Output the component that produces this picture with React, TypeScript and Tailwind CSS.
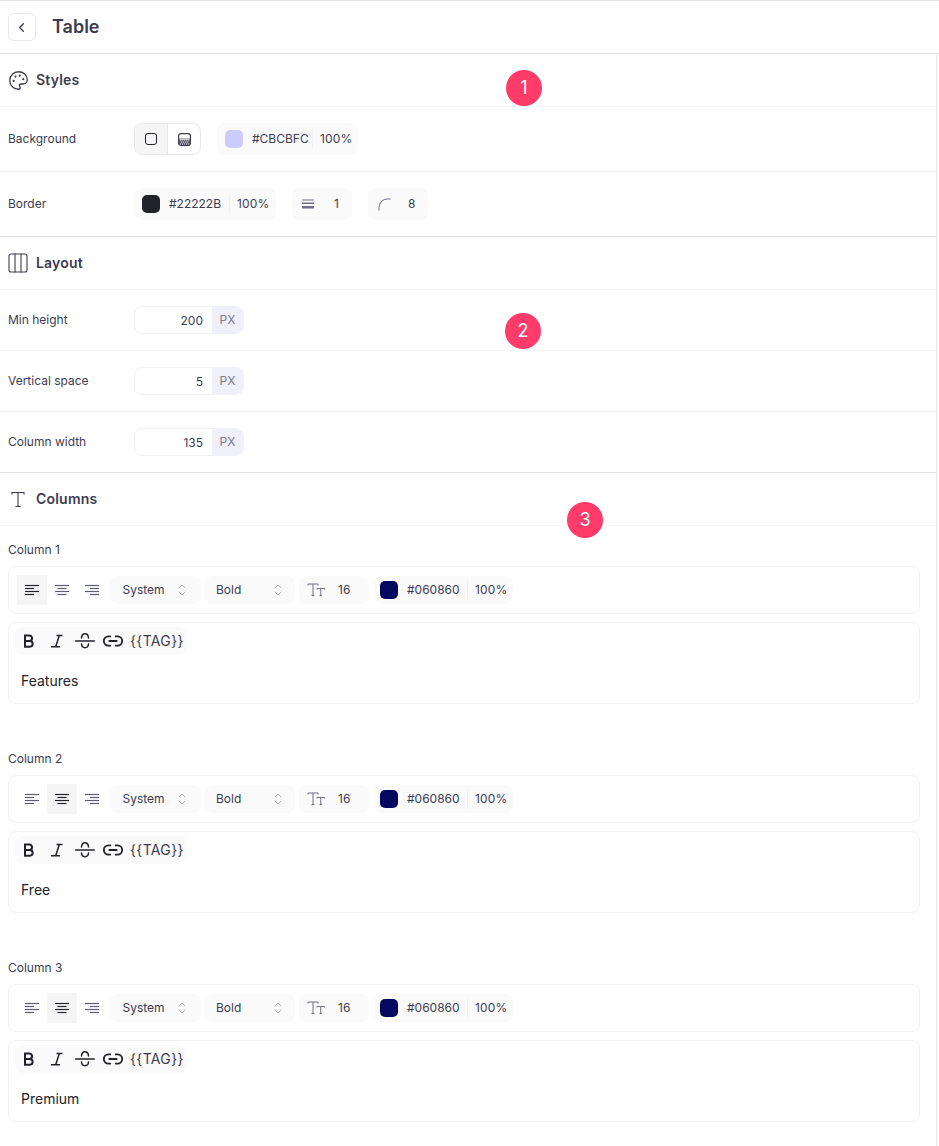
import { ChevronLeft, Palette, Columns3, Link2 } from 'lucide-react'

const fontStack = { fontFamily: 'Inter, "Noto Sans", sans-serif' }

function Swatch({ color }: { color: string }) {
  return <span className="h-[18px] w-[18px] shrink-0 rounded-[5px]" style={{ backgroundColor: color }} />
}

function ColorChip({ color, hex, w }: { color: string; hex: string; w: string }) {
  return (
    <div className={`flex h-8 items-center rounded-lg bg-[#fafafb] pl-2 text-xs text-[#3c3c50] ${w}`}>
      <Swatch color={color} />
      <span className="ml-[9px] w-[60px]">{hex}</span>
      <span className="h-5 w-px bg-[#f0f0f5]" />
      <span className="ml-[7px] tracking-[0.2px]">100%</span>
    </div>
  )
}

function AlignIcon({ kind, on }: { kind: 'left' | 'center' | 'right'; on: boolean }) {
  const lines = {
    left: ['M1 3.500h14', 'M1 6.500h9', 'M1 9.500h14', 'M1 12.500h9'],
    center: ['M1 3.500h14', 'M3.500 6.500h9', 'M1 9.500h14', 'M3.500 12.500h9'],
    right: ['M1 3.500h14', 'M6 6.500h9', 'M1 9.500h14', 'M6 12.500h9'],
  }[kind]
  return (
    <svg width="16" height="16" viewBox="0 0 16 16" fill="none" stroke={on ? '#22222b' : '#5c5c72'} strokeWidth="1.200">
      {lines.map((d) => (
        <path key={d} d={d} />
      ))}
    </svg>
  )
}

function UpDown() {
  return (
    <svg width="10" height="14" viewBox="0 0 10 14" fill="none" stroke="#b4b4c0" strokeWidth="1" strokeLinecap="round">
      <path d="M2 5l3-3 3 3M2 9l3 3 3-3" />
    </svg>
  )
}

function Select({ label, w, gap }: { label: string; w: string; gap: string }) {
  return (
    <div className={`flex h-7 items-center rounded-lg bg-[#fafafb] text-xs text-[#3c3c50] ${w}`}>
      <span className={gap}>{label}</span>
      <UpDown />
    </div>
  )
}

function SizeIcon() {
  return (
    <svg width="18" height="14" viewBox="0 0 18 14" fill="none" stroke="#6e6e85" strokeWidth="1">
      <path d="M1 2.500V1h10v1.500M6 1v11.500M4.500 12.500h3" />
      <path d="M10 6.500V5.500h7.500v1M13.750 5.500v7M12.500 12.500h2.500" />
    </svg>
  )
}

function BoldIcon() {
  return (
    <svg width="12" height="14" viewBox="0 0 12 14" fill="none" stroke="#22222b" strokeWidth="2">
      <path d="M2 1.500h4.300a2.750 2.750 0 0 1 0 5.500H2zM2 7h4.800a2.850 2.850 0 0 1 0 5.700H2z" />
    </svg>
  )
}

function ItalicIcon() {
  return (
    <svg width="14" height="14" viewBox="0 0 14 14" fill="none" stroke="#22222b" strokeWidth="1.500">
      <path d="M6.500 1.500H12.500M9.300 1.500L5.700 12.700M1 12.700H10" />
    </svg>
  )
}

function StrikeIcon() {
  return (
    <svg width="20" height="20" viewBox="0 0 20 20" fill="none" stroke="#22222b" strokeWidth="1.500" strokeLinecap="round">
      <path d="M0.700 10h18.600" />
      <path d="M6.500 7C6.700 4 8.200 2.800 10 2.800s3.300 1.200 3.500 4.200" />
      <path d="M6.500 13c.2 2.500 1.700 3.700 3.500 3.700s3.300-1.200 3.500-3.700" />
    </svg>
  )
}

function SectionHead({ icon, title }: { icon: React.ReactNode; title: string }) {
  return (
    <div className="flex h-[53px] items-center border-b border-[#f5f5f7] pl-[9px]">
      <span className="flex w-[27px] shrink-0 items-center">{icon}</span>
      <span className="text-sm font-semibold tracking-[0.2px] text-[#3c3c50]">{title}</span>
    </div>
  )
}

function NumberRow({ label, value, last }: { label: string; value: string; last?: boolean }) {
  return (
    <div className={`flex items-center pl-2 ${last ? 'h-[60px]' : 'h-[61px] border-b border-[#f5f5f7]'}`}>
      <span className="w-[126px] text-xs text-[#3c3c50]">{label}</span>
      <div className="flex h-7 w-[110px] overflow-hidden rounded-lg border border-[#f0f0f7] bg-white text-xs">
        <span className="flex-1 pr-[9px] pt-1.5 text-right leading-4 text-[#3c3c50]">{value}</span>
        <span className="flex w-[31px] items-center justify-center bg-[#eff0fa] text-[#7b7b8f]">PX</span>
      </div>
    </div>
  )
}

function ColumnEditor({ title, text, active }: { title: string; text: string; active: 'left' | 'center' }) {
  const kinds: ('left' | 'center' | 'right')[] = ['left', 'center', 'right']
  return (
    <div className="h-[209px] pl-2 pr-4 pt-[15px]">
      <div className="h-[25px] text-xs leading-[18px] text-[#3c3c50]">{title}</div>
      <div className="flex h-12 items-center rounded-lg border border-[#f0f0f7] pl-2">
        <div className="flex">
          {kinds.map((k) => (
            <span
              key={k}
              className={`flex h-[30px] w-[30px] items-center justify-center ${active === k ? 'bg-[#f5f5f5]' : ''}`}
            >
              <AlignIcon kind={k} on={active === k} />
            </span>
          ))}
        </div>
        <div className="ml-[3px] flex items-center gap-1">
          <Select label="System" w="w-[91px] pl-[12.500px]" gap="mr-[11px] w-[43px]" />
          <Select label="Bold" w="w-[90px] pl-[11px]" gap="mr-[14px] w-[43px]" />
          <div className="flex h-7 w-[70px] items-center rounded-lg bg-[#fafafb] pl-2 text-xs text-[#3c3c50]">
            <SizeIcon />
            <span className="ml-[13px] tracking-[0.2px]">16</span>
          </div>
          <div className="ml-px flex h-7 w-[139px] items-center rounded-lg bg-[#fafafb] pl-[6px] text-xs text-[#3c3c50]">
            <Swatch color="#060860" />
            <span className="ml-[9px] w-[60px]">#060860</span>
            <span className="h-5 w-px bg-[#f0f0f5]" />
            <span className="ml-[7px] tracking-[0.2px]">100%</span>
          </div>
        </div>
      </div>
      <div className="mt-2 h-[82px] rounded-lg border border-[#f0f0f7] pl-[6px] pt-1">
        <div className="flex h-7 w-[172px] items-center rounded-lg bg-[#fafafb] text-[#22222b]">
          <span className="flex w-7 justify-center">
            <BoldIcon />
          </span>
          <span className="flex w-7 justify-center">
            <ItalicIcon />
          </span>
          <span className="flex w-7 justify-center">
            <StrikeIcon />
          </span>
          <span className="flex w-7 justify-center">
            <Link2 size={22} strokeWidth={2} />
          </span>
          <span className="ml-[3px] text-sm tracking-[0.35px] text-[#3c3c50]">{'{{TAG}}'}</span>
        </div>
        <div className="pl-[6px] pt-4 text-sm leading-5 text-[#22222b]">{text}</div>
      </div>
    </div>
  )
}

function Badge({ n, className }: { n: number; className: string }) {
  return (
    <span
      className={`absolute flex h-9 w-9 items-center justify-center rounded-full bg-[#ff3b69] text-lg text-white ${className}`}
    >
      {n}
    </span>
  )
}

export default function App() {
  return (
    <div className="relative h-[1146px] w-[939px] overflow-hidden bg-white" style={fontStack}>
      {/* Header */}
      <div className="flex h-[54px] items-center border-y border-t-[#e5e5e5] border-b-[#e0e0e3] pl-2">
        <button className="flex h-7 w-7 items-center justify-center rounded-md border border-[#e8e8ec] text-[#3c3c50]">
          <ChevronLeft size={15} className="-ml-px" />
        </button>
        <span className="ml-4 text-lg font-semibold text-[#3c3c50]">Table</span>
      </div>

      <div className="w-[937px] border-r border-[#e5e5e5]">
        {/* Styles */}
        <SectionHead icon={<Palette size={21} strokeWidth={1.5} color="#3c3c50" className="-ml-px" />} title="Styles" />
        <div className="flex h-[65px] items-center border-b border-[#f5f5f7] pl-2">
          <span className="w-[126px] text-xs text-[#3c3c50]">Background</span>
          <div className="flex h-8 w-[67px] overflow-hidden rounded-lg border border-[#e8e8ec]">
            <span className="flex w-[33px] items-center justify-center border-r border-[#e8e8ec] bg-[#f5f5f5]">
              <span className="h-3 w-3 rounded-[3px] border-[1.5px] border-[#22222b]" />
            </span>
            <span className="flex flex-1 items-center justify-center">
              <svg width="13" height="13" viewBox="0 0 13 13" fill="none">
                <rect x="0.600" y="0.600" width="11.800" height="11.800" rx="2.500" stroke="#3c3c50" strokeWidth="1.200" />
                <path d="M1 5h11v1H1z" fill="#3c3c50" opacity="0.350" />
                <path d="M1 6.500h11v4.500a1 1 0 0 1-1 1H2a1 1 0 0 1-1-1z" fill="#3c3c50" opacity="0.800" />
                <path d="M2 7h1M4 7h1M6 7h1M8 7h1M10 7h1M3 9h1M5 9h1M7 9h1M9 9h1M2 11h1M4 11h1M6 11h1M8 11h1M10 11h1" stroke="#fff" strokeWidth="1" opacity="0.800" />
              </svg>
            </span>
          </div>
          <div className="ml-4">
            <ColorChip color="#cbcbfc" hex="#CBCBFC" w="w-[141px]" />
          </div>
        </div>
        <div className="flex h-[65px] items-center border-b border-[#e0e0e3] pl-2">
          <span className="w-[126px] text-xs text-[#3c3c50]">Border</span>
          <ColorChip color="#22222b" hex="#22222B" w="w-[142px]" />
          <div className="ml-4 flex h-8 w-[60px] items-center rounded-lg bg-[#fafafb] pl-[10px] text-xs text-[#3c3c50]">
            <svg width="12" height="10" viewBox="0 0 12 10" fill="#6e6e85">
              <rect y="0.500" width="12" height="1" />
              <rect y="3.500" width="12" height="1.500" />
              <rect y="7" width="12" height="2.500" />
            </svg>
            <span className="ml-[20px]">1</span>
          </div>
          <div className="ml-4 flex h-8 w-[60px] items-center rounded-lg bg-[#fafafb] pl-[10px] text-xs text-[#3c3c50]">
            <svg width="13" height="13" viewBox="0 0 13 13" fill="none" stroke="#6e6e85" strokeWidth="1">
              <path d="M1 12.500V9.500A8.500 8.500 0 0 1 9.500 1H12.500" />
            </svg>
            <span className="ml-[17px]">8</span>
          </div>
        </div>

        {/* Layout */}
        <SectionHead icon={<Columns3 size={24} strokeWidth={1.1} color="#3c3c50" className="-ml-[3px]" />} title="Layout" />
        <NumberRow label="Min height" value="200" />
        <NumberRow label="Vertical space" value="5" />
        <div className="border-b border-[#e0e0e3]">
          <NumberRow label="Column width" value="135" last />
        </div>

        {/* Columns */}
        <SectionHead
          icon={
            <svg width="18" height="18" viewBox="0 0 18 18" fill="none" stroke="#3c3c50" strokeWidth="1.100">
              <path d="M3 4.500V2.500h12v2M9 2.500v14M6.500 16.500h5" />
            </svg>
          }
          title="Columns"
        />
        <ColumnEditor title="Column 1" text="Features" active="left" />
        <ColumnEditor title="Column 2" text="Free" active="center" />
        <ColumnEditor title="Column 3" text="Premium" active="center" />
      </div>

      <Badge n={1} className="left-[506px] top-[70px]" />
      <Badge n={2} className="left-[505px] top-[313px]" />
      <Badge n={3} className="left-[567px] top-[502px]" />
    </div>
  )
}
